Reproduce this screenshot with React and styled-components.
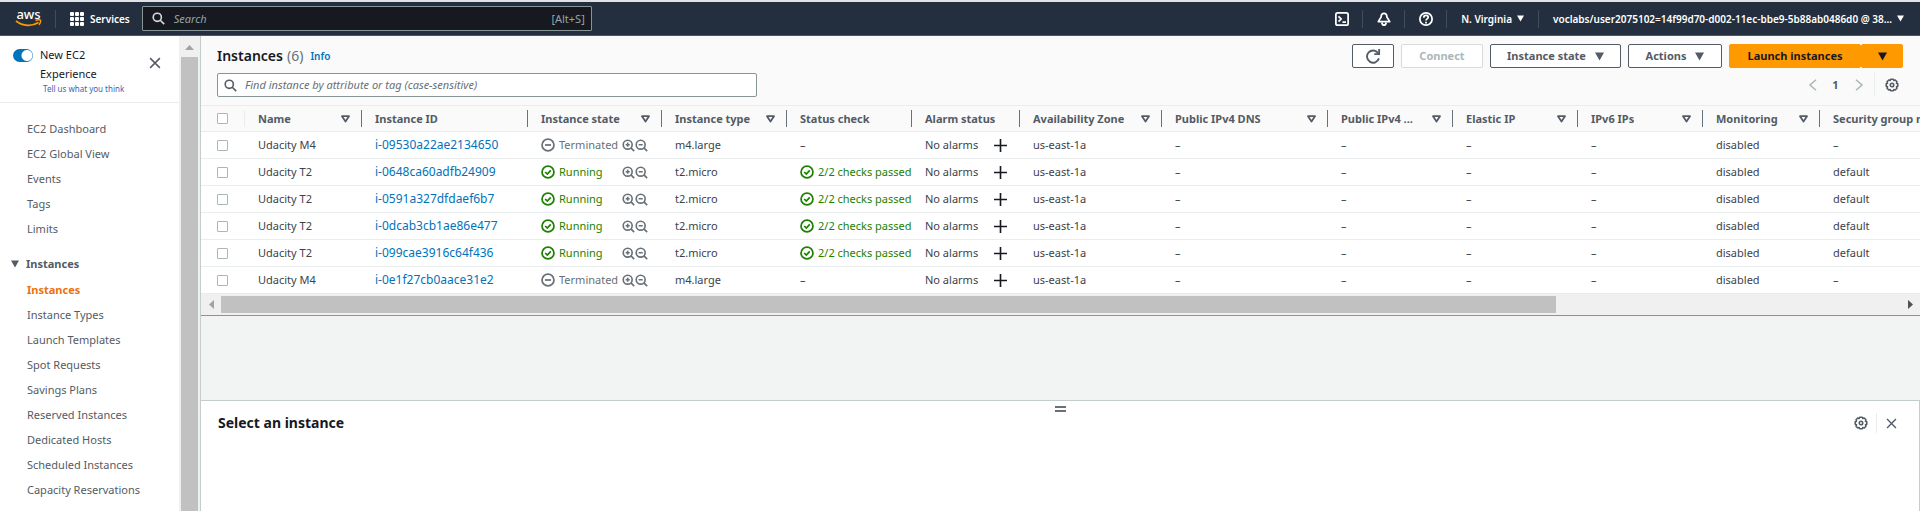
import React from "react";
import styled, { createGlobalStyle, css } from "styled-components";

const GlobalStyle = createGlobalStyle`
  *, *::before, *::after { box-sizing: border-box; }
  body {
    margin: 0;
    font-family: "Noto Sans", "Open Sans", sans-serif;
    font-size: 11px;
    line-height: 16px;
    color: #3d4249;
    background: #f2f3f3;
  }
  button, input { font: inherit; color: inherit; }
  a { text-decoration: none; color: inherit; }
  h1, h2, ul { margin: 0; padding: 0; font-size: inherit; }
  ul { list-style: none; }
  svg { display: block; flex: none; }
`;

/* ---------- page frame ---------- */

const Page = styled.div`
  display: flex;
  flex-direction: column;
  height: 100vh;
  overflow: hidden;
`;

const Body = styled.div`
  display: flex;
  flex: 1;
  min-height: 0;
`;

/* ---------- top navigation ---------- */

const TopBar = styled.header`
  display: flex;
  align-items: center;
  height: 36px;
  flex: none;
  border-top: 2px solid #dfe3e6;
  border-bottom: 1px solid #50565f;
  background: #232f3e;
  color: #fff;
  font-size: 10px;
  font-weight: 600;
`;

const LogoLink = styled.a`
  padding: 0 13px 0 15px;
`;

const ServicesButton = styled.button`
  display: flex;
  align-items: center;
  gap: 6px;
  height: 18px;
  margin-right: 12px;
  padding: 0 0 0 14px;
  border: 0;
  border-left: 1px solid #414d5c;
  background: none;
`;

const GlobalSearch = styled.label`
  display: flex;
  align-items: center;
  width: 450px;
  height: 25px;
  padding: 0 6px 0 9px;
  gap: 9px;
  border: 1px solid #879596;
  border-radius: 1px;
  background: #16191f;
  color: #d5dbdb;
  font-size: 11px;
  font-weight: 400;
`;

const BareInput = styled.input`
  flex: 1;
  min-width: 0;
  padding: 0;
  border: 0;
  outline: 0;
  background: none;
  font-style: italic;
  &::placeholder { color: ${(p) => p.$hint}; opacity: 1; }
`;

const Shortcut = styled.span`
  color: #95a5a6;
`;

const TopActions = styled.nav`
  display: flex;
  align-items: center;
  margin-left: auto;
  padding-right: 2px;
`;

const TopButton = styled.button`
  display: flex;
  align-items: center;
  justify-content: center;
  gap: 5px;
  height: 18px;
  padding: 0 14px;
  border: 0;
  border-left: 1px solid ${(p) => (p.$first ? "transparent" : "#414d5c")};
  background: none;
  white-space: nowrap;
  ${(p) => p.$icon && css`width: 42px; padding: 0;`}
`;

/* ---------- side navigation ---------- */

const Sidebar = styled.aside`
  display: flex;
  width: 201px;
  flex: none;
  border-right: 1px solid #c4cccc;
  background: #fff;
  color: #545b64;
`;

const SidebarContent = styled.div`
  flex: 1;
  overflow: hidden;
`;

const Experience = styled.div`
  display: flex;
  align-items: flex-start;
  gap: 7px;
  height: 67px;
  padding: 9px 18px 0 13px;
  border-bottom: 1px solid #eaeded;
`;

const Switch = styled.input`
  appearance: none;
  flex: none;
  width: 20px;
  height: 13px;
  margin: 4px 0 0;
  border-radius: 7px;
  background: radial-gradient(circle at 14px 50%, #fff 5px, #0073bb 6px);
`;

const ExperienceText = styled.div`
  flex: 1;
  label {
    display: block;
    width: 80px;
    line-height: 19px;
    color: #16191f;
  }
  a {
    display: block;
    padding-left: 3px;
    font-size: 8px;
    line-height: 11px;
    white-space: nowrap;
    color: #3b63b5;
  }
`;

const IconButton = styled.button`
  display: flex;
  align-items: center;
  justify-content: center;
  padding: 0;
  border: 0;
  background: none;
  color: #545b64;
`;

const ExperienceClose = styled(IconButton)`
  margin-top: 12px;
`;

const NavList = styled.ul`
  padding-left: 27px;
  line-height: 25px;
  white-space: nowrap;
`;

const NavGroup = styled.nav`
  padding-top: 13px;
`;

const NavHeading = styled.h2`
  display: flex;
  align-items: center;
  gap: 7px;
  height: 26px;
  margin-top: 10px;
  padding-left: 11px;
  font-weight: 700;
`;

const NavLink = styled.a`
  ${(p) => p.$active && css`color: #ec7211; font-weight: 700;`}
`;

const SideScroll = styled.div`
  display: flex;
  flex-direction: column;
  align-items: center;
  width: 21px;
  background: #f0f0f0;
  color: #a3a3a3;
  svg { margin: 9px 0 7px; }
`;

const SideThumb = styled.div`
  flex: 1;
  width: 17px;
  background: #c1c1c1;
`;

/* ---------- main column ---------- */

const Main = styled.main`
  display: flex;
  flex-direction: column;
  flex: 1;
  min-width: 0;
`;

const Toolbar = styled.div`
  display: flex;
  flex-direction: column;
  gap: 5px;
  padding: 8px 17px 8px 16px;
  background: #fafafa;
`;

const ToolbarRow = styled.div`
  display: flex;
  align-items: center;
  justify-content: space-between;
`;

const Title = styled.h1`
  display: flex;
  align-items: center;
  gap: 4px;
  font-size: 14px;
  line-height: 20px;
  font-weight: 600;
  color: #16191f;
  span { font-weight: 400; color: #687078; }
`;

const InfoLink = styled.a`
  margin-left: 3px;
  font-size: 10px;
  font-weight: 600;
  color: #0073bb;
`;

const Actions = styled.div`
  display: flex;
  gap: 7px;
`;

const Button = styled.button`
  display: flex;
  align-items: center;
  justify-content: center;
  gap: 9px;
  height: 24px;
  min-width: ${(p) => p.$min || "42px"};
  padding: 0 8px;
  border: 1px solid #545b64;
  border-radius: 2px;
  background: #fff;
  color: #545b64;
  font-weight: 700;
  white-space: nowrap;
  &:disabled { border-color: #d5dbdb; color: #aab7b8; }
  ${(p) => p.$primary && css`
    border-color: #ff9900;
    background: #ff9900;
    color: #16191f;
  `}
`;

const SplitButton = styled.div`
  display: flex;
`;

const FilterBox = styled.label`
  display: flex;
  align-items: center;
  gap: 8px;
  width: 540px;
  height: 24px;
  padding: 0 6px;
  border: 1px solid #879596;
  border-radius: 2px;
  background: #fff;
  color: #545b64;
`;

const Pager = styled.div`
  display: flex;
  align-items: center;
  height: 24px;
  font-weight: 700;
  color: #545b64;
`;

const PagerButton = styled(IconButton)`
  width: 23px;
  color: #aab7b8;
`;

const PageNumber = styled.span`
  width: 23px;
  text-align: center;
`;

const SettingsButton = styled(IconButton)`
  height: ${(p) => p.$height};
  margin-left: 4px;
  padding: 0 4px 0 10px;
  border-left: 1px solid #eaeded;
`;

/* ---------- instances table ---------- */

const TableWrap = styled.div`
  overflow: hidden;
  background: #fff;
`;

const Table = styled.table`
  width: 2162px;
  table-layout: fixed;
  border-collapse: separate;
  border-spacing: 0;
`;

const HeadCell = styled.th`
  height: 27px;
  padding: 0;
  border-top: 1px solid #eaeded;
  border-bottom: 1px solid #eaeded;
  background: #fafafa;
  color: #545b64;
  text-align: left;
  font-weight: 700;
`;

const HeadLabel = styled.div`
  display: flex;
  align-items: center;
  justify-content: space-between;
  height: 17px;
  padding: 0 11px 0 ${(p) => (p.$select ? "16px" : "13px")};
  border-right: 1px solid ${(p) => (p.$select ? "#eaeded" : "#687078")};
  white-space: nowrap;
`;

const Cell = styled.td`
  height: 27px;
  padding: 0 0 0 ${(p) => (p.$select ? "16px" : "13px")};
  border-bottom: 1px solid #eaeded;
  white-space: nowrap;
  overflow: hidden;
`;

const Checkbox = styled.input`
  appearance: none;
  display: block;
  width: 11px;
  height: 11px;
  margin: 0;
  border: 1px solid #aab7b8;
  border-radius: 1px;
  background: #fff;
`;

const IdLink = styled.a`
  font-size: 12px;
  color: #0073bb;
`;

const Inline = styled.div`
  display: flex;
  align-items: center;
`;

const Status = styled.span`
  display: flex;
  align-items: center;
  gap: 4px;
  min-width: ${(p) => p.$min || "0"};
  color: ${(p) => (p.$ok ? "#1d8102" : "#687078")};
`;

const AlarmText = styled.span`
  width: 69px;
`;

const ZoomButton = styled(IconButton)`
  color: #687078;
`;

const AddButton = styled(IconButton)`
  color: #16191f;
`;

const TableScroll = styled.div`
  display: flex;
  align-items: center;
  height: 22px;
  flex: none;
  border-bottom: 1px solid #879596;
  background: #f0f0f0;
`;

const ScrollArrow = styled.span`
  display: flex;
  justify-content: center;
  width: 20px;
  color: ${(p) => (p.$dark ? "#505050" : "#a3a3a3")};
`;

const ScrollTrack = styled.div`
  flex: 1;
`;

const ScrollThumb = styled.div`
  width: 79.5%;
  height: 17px;
  background: #c1c1c1;
`;

/* ---------- details panel ---------- */

const Gap = styled.div`
  flex: 1;
  background: #f2f3f3;
`;

const DetailPanel = styled.section`
  height: 111px;
  flex: none;
  padding: 5px 0 0;
  border-top: 1px solid #c4cccc;
  border-right: 1px solid #c4cccc;
  background: #fff;
`;

const DragHandle = styled.div`
  width: 11px;
  height: 6px;
  margin: 0 auto;
  border-top: 2px solid #687078;
  border-bottom: 2px solid #687078;
`;

const DetailHeader = styled.div`
  display: flex;
  align-items: center;
  justify-content: space-between;
  height: 22px;
  padding: 0 22px 0 17px;
  h2 { font-size: 14px; font-weight: 700; color: #16191f; }
`;

const DetailActions = styled.div`
  display: flex;
  align-items: center;
  gap: 8px;
`;

const DetailClose = styled(IconButton)`
  height: 20px;
  padding-left: 9px;
  border-left: 1px solid #eaeded;
`;

/* ---------- icons ---------- */

const Svg = ({ size = 16, w = 2, children, ...rest }) => (
  <svg width={size} height={size} viewBox="0 0 16 16" fill="none" stroke="currentColor" strokeWidth={w} aria-hidden="true" {...rest}>
    {children}
  </svg>
);

const LogoWrap = styled.span`
  display: flex;
  flex-direction: column;
  align-items: center;
  width: 27px;
  span { font-size: 13px; line-height: 10px; font-weight: 500; }
`;

const AwsLogo = () => (
  <LogoWrap>
    <span>aws</span>
    <svg width="27" height="9" viewBox="0 0 27 9" fill="none" stroke="#ff9900" aria-hidden="true">
      <path d="M1 2c7 5.500 16 5.500 22.500 1.500" strokeWidth="1.800" />
      <path d="M20.500 1.500c2-.9 4.500-.8 5-.2s-.2 3.200-1.600 4.600" strokeWidth="1.400" />
    </svg>
  </LogoWrap>
);

const SearchIcon = ({ size = 13 }) => (
  <Svg size={size}>
    <circle cx="6.500" cy="6.500" r="5" />
    <path d="M10.200 10.200l4.800 4.800" />
  </Svg>
);

const Caret = ({ size = 8 }) => (
  <svg width={size} height={size} viewBox="0 0 8 8" fill="currentColor" aria-hidden="true">
    <path d="M0 .5h8L4 7.500z" />
  </svg>
);

const SortIcon = () => (
  <svg width="9" height="8" viewBox="0 0 9 8" fill="none" stroke="#545b64" strokeWidth="1.800" strokeLinejoin="round" aria-hidden="true">
    <path d="M1 1.200h7L4.500 6.500z" />
  </svg>
);

const CloseIcon = ({ size = 12 }) => (
  <Svg size={size}>
    <path d="M1.500 1.500l13 13M14.500 1.500l-13 13" />
  </Svg>
);

const GearIcon = () => (
  <Svg size={14} w={1.8}>
    <path d="M6.500 1.400h3l.6 1.500 1.600-.6 2 2-.6 1.600 1.500.6v3l-1.500.6.6 1.600-2 2-1.600-.6-.6 1.500h-3l-.6-1.500-1.600.6-2-2 .6-1.600-1.500-.6v-3l1.500-.6-.6-1.600 2-2 1.600.6z" strokeLinejoin="round" />
    <circle cx="8" cy="8" r="2" />
  </Svg>
);

const ZoomIcon = ({ plus }) => (
  <Svg size={13}>
    <circle cx="7" cy="7" r="5.500" />
    <path d="M11 11l4 4M4.500 7h5" />
    {plus && <path d="M7 4.500v5" />}
  </Svg>
);

const StatusIcon = ({ ok }) => (
  <Svg size={14}>
    <circle cx="8" cy="8" r="6.800" />
    <path d={ok ? "M4.800 8l2.400 2.400 4-4.200" : "M4.500 8h7"} />
  </Svg>
);

const GridIcon = () => (
  <svg width="14" height="14" viewBox="0 0 14 14" fill="#fff" aria-hidden="true">
    {[0, 5, 10].flatMap((y) => [0, 5, 10].map((x) => <rect key={`${x}-${y}`} x={x} y={y} width="4" height="4" rx="1" />))}
  </svg>
);

/* ---------- data ---------- */

const mainLinks = ["EC2 Dashboard", "EC2 Global View", "Events", "Tags", "Limits"];
const instanceLinks = [
  "Instances", "Instance Types", "Launch Templates", "Spot Requests", "Savings Plans",
  "Reserved Instances", "Dedicated Hosts", "Scheduled Instances", "Capacity Reservations",
];

const columns = [
  { label: "Name", width: 117, sort: true },
  { label: "Instance ID", width: 166 },
  { label: "Instance state", width: 134, sort: true },
  { label: "Instance type", width: 125, sort: true },
  { label: "Status check", width: 125 },
  { label: "Alarm status", width: 108 },
  { label: "Availability Zone", width: 142, sort: true },
  { label: "Public IPv4 DNS", width: 166, sort: true },
  { label: "Public IPv4 ...", width: 125, sort: true },
  { label: "Elastic IP", width: 125, sort: true },
  { label: "IPv6 IPs", width: 125, sort: true },
  { label: "Monitoring", width: 117, sort: true },
  { label: "Security group name", sort: true },
];

const instances = [
  { id: "i-09530a22ae2134650", running: false },
  { id: "i-0648ca60adfb24909", running: true },
  { id: "i-0591a327dfdaef6b7", running: true },
  { id: "i-0dcab3cb1ae86e477", running: true },
  { id: "i-099cae3916c64f436", running: true },
  { id: "i-0e1f27cb0aace31e2", running: false },
];

/* ---------- sections ---------- */

function TopNav() {
  return (
    <TopBar>
      <LogoLink href="#home" aria-label="AWS home"><AwsLogo /></LogoLink>
      <ServicesButton><GridIcon />Services</ServicesButton>
      <GlobalSearch>
        <SearchIcon />
        <BareInput type="text" placeholder="Search" $hint="#95a5a6" aria-label="Search" />
        <Shortcut>[Alt+S]</Shortcut>
      </GlobalSearch>
      <TopActions>
        <TopButton $icon $first aria-label="CloudShell">
          <Svg size={14}>
            <rect x="1" y="1" width="14" height="14" rx="2" />
            <path d="M4 5l3 3-3 3M8.500 11.500h4" />
          </Svg>
        </TopButton>
        <TopButton $icon aria-label="Notifications">
          <Svg size={14}>
            <path d="M8 1.500c-2.500 0-3.300 2-3.300 4.200L1.500 11h13l-3.200-5.300C11.300 3.500 10.500 1.500 8 1.500z" strokeLinejoin="round" />
            <path d="M5.500 12c.3 2 1.200 3 2.500 3s2.200-1 2.500-3" />
          </Svg>
        </TopButton>
        <TopButton $icon aria-label="Help">
          <Svg size={14}>
            <circle cx="8" cy="8" r="7" />
            <path d="M5.500 6.500c0-3.500 5-3.200 5-.3C10.500 7.800 8 8 8 9.800M8 11v2" />
          </Svg>
        </TopButton>
        <TopButton>N. Virginia<Caret size={7} /></TopButton>
        <TopButton>voclabs/user2075102=14f99d70-d002-11ec-bbe9-5b88ab0486d0 @ 38...<Caret size={7} /></TopButton>
      </TopActions>
    </TopBar>
  );
}

function SideNav() {
  return (
    <Sidebar>
      <SidebarContent>
        <Experience>
          <Switch type="checkbox" id="new-experience" defaultChecked />
          <ExperienceText>
            <label htmlFor="new-experience">New EC2 Experience</label>
            <a href="#feedback">Tell us what you think</a>
          </ExperienceText>
          <ExperienceClose aria-label="Close navigation"><CloseIcon /></ExperienceClose>
        </Experience>
        <NavGroup>
          <NavList>
            {mainLinks.map((t) => <li key={t}><NavLink href="#nav">{t}</NavLink></li>)}
          </NavList>
          <NavHeading><Caret />Instances</NavHeading>
          <NavList>
            {instanceLinks.map((t, i) => <li key={t}><NavLink href="#nav" $active={i === 0}>{t}</NavLink></li>)}
          </NavList>
        </NavGroup>
      </SidebarContent>
      <SideScroll>
        <svg width="9" height="5" viewBox="0 0 9 5" fill="currentColor" aria-hidden="true"><path d="M0 5h9L4.500 0z" /></svg>
        <SideThumb />
      </SideScroll>
    </Sidebar>
  );
}

function InstanceRow({ id, running }) {
  return (
    <tr>
      <Cell $select><Checkbox type="checkbox" aria-label={`Select ${id}`} /></Cell>
      <Cell>{running ? "Udacity T2" : "Udacity M4"}</Cell>
      <Cell><IdLink href="#instance">{id}</IdLink></Cell>
      <Cell>
        <Inline>
          <Status $ok={running} $min="81px"><StatusIcon ok={running} />{running ? "Running" : "Terminated"}</Status>
          <ZoomButton aria-label="Include state in filter"><ZoomIcon plus /></ZoomButton>
          <ZoomButton aria-label="Exclude state from filter"><ZoomIcon /></ZoomButton>
        </Inline>
      </Cell>
      <Cell>{running ? "t2.micro" : "m4.large"}</Cell>
      <Cell>{running ? <Status $ok><StatusIcon ok />2/2 checks passed</Status> : "–"}</Cell>
      <Cell>
        <Inline>
          <AlarmText>No alarms</AlarmText>
          <AddButton aria-label="Add alarm"><Svg size={13}><path d="M8 0v16M0 8h16" /></Svg></AddButton>
        </Inline>
      </Cell>
      <Cell>us-east-1a</Cell>
      <Cell>–</Cell>
      <Cell>–</Cell>
      <Cell>–</Cell>
      <Cell>–</Cell>
      <Cell>disabled</Cell>
      <Cell>{running ? "default" : "–"}</Cell>
    </tr>
  );
}

function InstancesTable() {
  return (
    <TableWrap>
      <Table>
        <colgroup>
          <col width="44" />
          {columns.map((c) => <col key={c.label} width={c.width} />)}
        </colgroup>
        <thead>
          <tr>
            <HeadCell><HeadLabel $select><Checkbox type="checkbox" aria-label="Select all" /></HeadLabel></HeadCell>
            {columns.map((c) => (
              <HeadCell key={c.label}><HeadLabel>{c.label}{c.sort && <SortIcon />}</HeadLabel></HeadCell>
            ))}
          </tr>
        </thead>
        <tbody>{instances.map((row) => <InstanceRow key={row.id} {...row} />)}</tbody>
      </Table>
    </TableWrap>
  );
}

export default function App() {
  return (
    <Page>
      <GlobalStyle />
      <TopNav />
      <Body>
        <SideNav />
        <Main>
          <Toolbar>
            <ToolbarRow>
              <Title>Instances <span>(6)</span><InfoLink href="#info">Info</InfoLink></Title>
              <Actions>
                <Button aria-label="Refresh">
                  <Svg size={15}>
                    <path d="M13.800 10A6.500 6.500 0 1 1 13 4.500" />
                    <path d="M14 0v5.500H8.800" />
                  </Svg>
                </Button>
                <Button $min="82px" disabled>Connect</Button>
                <Button $min="131px">Instance state<Caret size={9} /></Button>
                <Button $min="94px">Actions<Caret size={9} /></Button>
                <SplitButton>
                  <Button $min="132px" $primary>Launch instances</Button>
                  <Button $primary aria-label="More launch options"><Caret size={9} /></Button>
                </SplitButton>
              </Actions>
            </ToolbarRow>
            <ToolbarRow>
              <FilterBox>
                <SearchIcon />
                <BareInput type="text" placeholder="Find instance by attribute or tag (case-sensitive)" $hint="#687078" aria-label="Filter instances" />
              </FilterBox>
              <Pager>
                <PagerButton aria-label="Previous page"><Svg size={12}><path d="M12 1L4 8l8 7" /></Svg></PagerButton>
                <PageNumber>1</PageNumber>
                <PagerButton aria-label="Next page"><Svg size={12}><path d="M4 1l8 7-8 7" /></Svg></PagerButton>
                <SettingsButton $height="24px" aria-label="Preferences"><GearIcon /></SettingsButton>
              </Pager>
            </ToolbarRow>
          </Toolbar>
          <InstancesTable />
          <TableScroll>
            <ScrollArrow><svg width="5" height="9" viewBox="0 0 5 9" fill="currentColor" aria-hidden="true"><path d="M5 0v9L0 4.500z" /></svg></ScrollArrow>
            <ScrollTrack><ScrollThumb /></ScrollTrack>
            <ScrollArrow $dark><svg width="5" height="9" viewBox="0 0 5 9" fill="currentColor" aria-hidden="true"><path d="M0 0v9L5 4.500z" /></svg></ScrollArrow>
          </TableScroll>
          <Gap />
          <DetailPanel>
            <DragHandle />
            <DetailHeader>
              <h2>Select an instance</h2>
              <DetailActions>
                <IconButton aria-label="Panel settings"><GearIcon /></IconButton>
                <DetailClose aria-label="Close panel"><CloseIcon size={11} /></DetailClose>
              </DetailActions>
            </DetailHeader>
          </DetailPanel>
        </Main>
      </Body>
    </Page>
  );
}
